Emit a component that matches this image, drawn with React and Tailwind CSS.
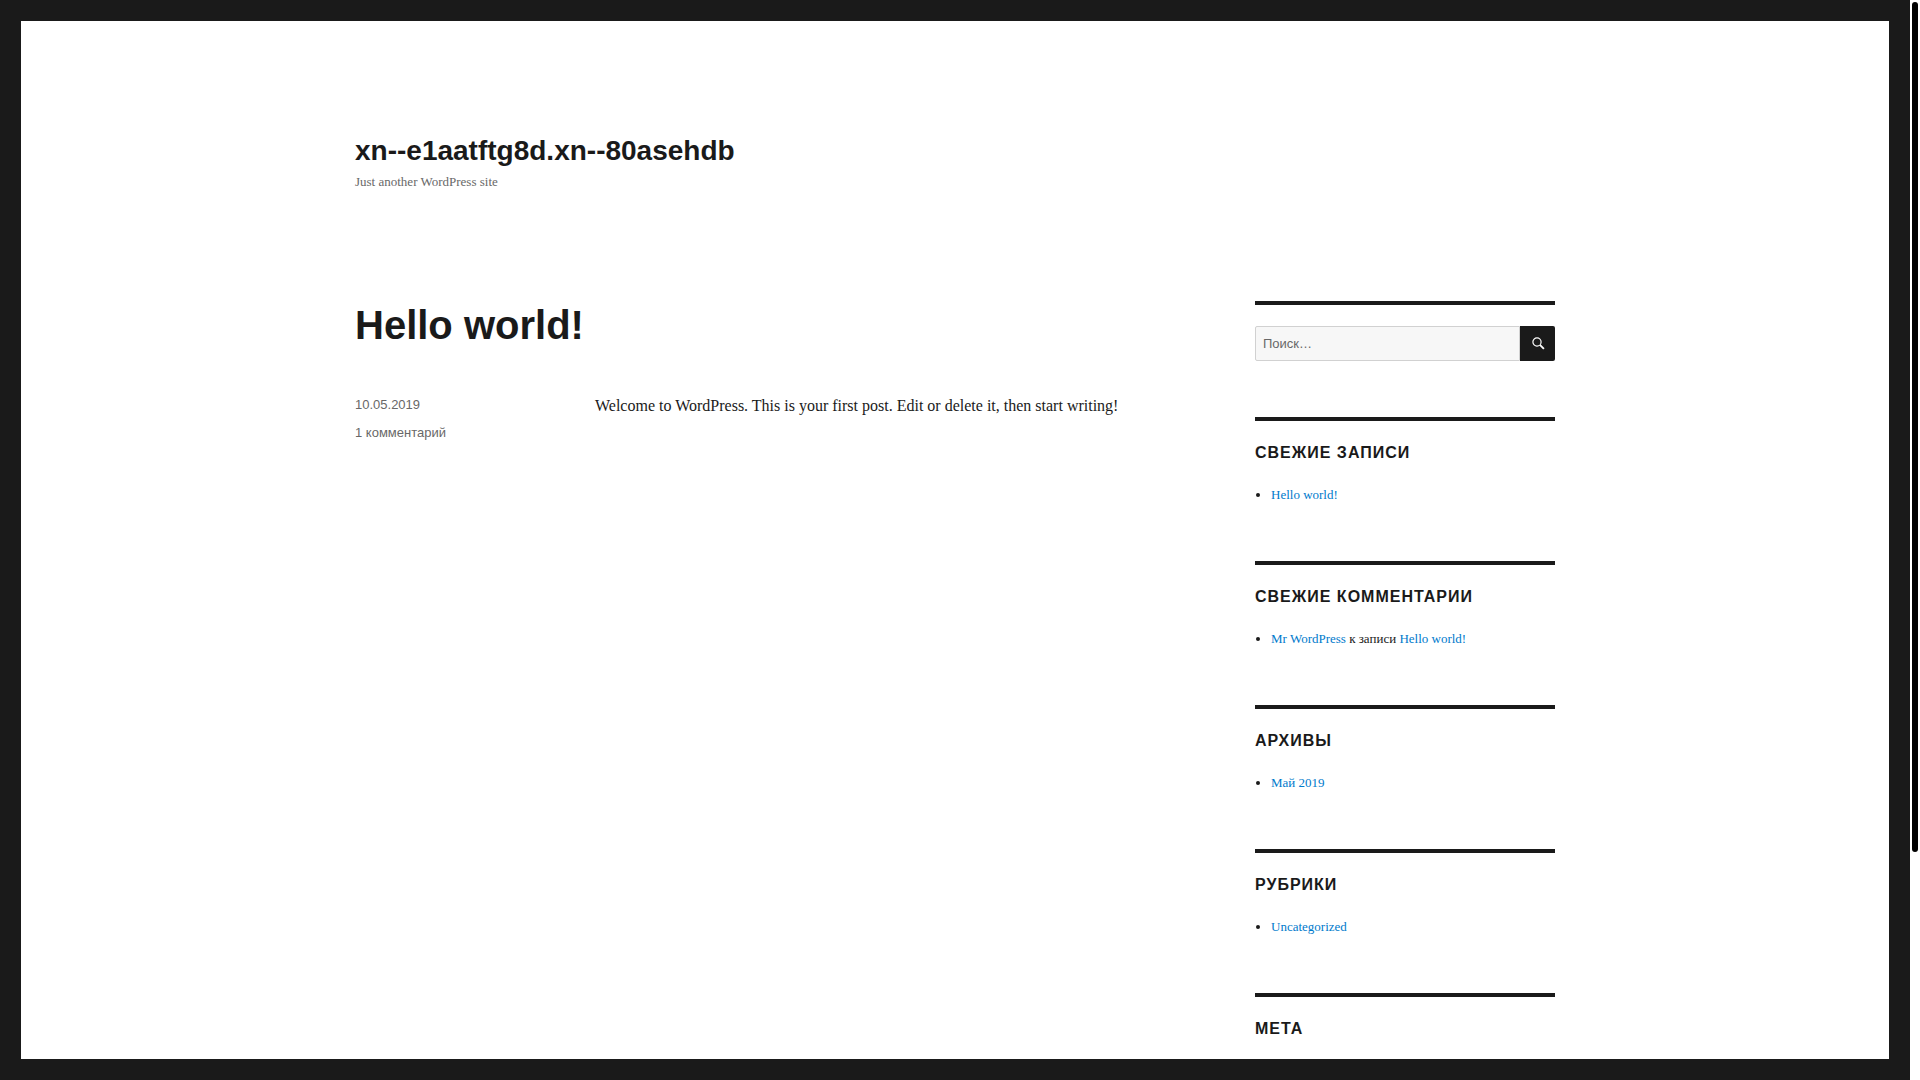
import React, { useState } from 'react';

const linkClass = 'text-[#007acc] hover:text-[#686868]';

function SearchIcon() {
  return (
    <svg viewBox="0 0 16 16" className="w-4 h-4" fill="none" stroke="currentColor" aria-hidden="true">
      <circle cx="7" cy="6" r="4.1" strokeWidth="1.2" />
      <path d="M9.9 8.9L13.9 12.9" strokeWidth="1.8" />
    </svg>
  );
}

function SearchForm() {
  const [query, setQuery] = useState('');

  return (
    <form role="search" className="flex" onSubmit={(e) => e.preventDefault()}>
      <input
        type="search"
        aria-label="Поиск"
        placeholder="Поиск…"
        value={query}
        onChange={(e) => setQuery(e.target.value)}
        className="flex-1 min-w-0 h-[35px] px-[7px] font-['Liberation_Sans',sans-serif] text-[13px] text-[#686868] placeholder:text-[#686868] bg-[#f7f7f7] border border-[#d1d1d1] rounded-l-xs outline-none focus:bg-white focus:border-[#007acc]"
      />
      <button
        type="submit"
        aria-label="Найти"
        className="w-[35px] h-[35px] flex items-center justify-center bg-[#1a1a1a] text-white rounded-r-xs hover:bg-[#007acc]"
      >
        <SearchIcon />
      </button>
    </form>
  );
}

function Widget({ title, children }) {
  return (
    <section className="border-t-4 border-[#1a1a1a] pt-[21px] mb-14">
      {title && (
        <h2 className="mb-[21px] font-['Liberation_Sans',sans-serif] text-base leading-[21px] font-bold uppercase tracking-[1px]">
          {title}
        </h2>
      )}
      {children}
    </section>
  );
}

function WidgetList({ children }) {
  return <ul className="list-disc pl-4 text-[13px] leading-[21px]">{children}</ul>;
}

export default function App() {
  return (
    <div className="h-screen flex bg-white font-['Liberation_Serif',serif] text-base text-[#1a1a1a]">
      <div className="flex-1 min-w-0 border-[21px] border-[#1a1a1a] overflow-y-auto [scrollbar-width:none]">
        <div className="max-w-[1200px] mx-auto">
          <header className="pt-28 pb-28">
            <p className="font-['Liberation_Sans',sans-serif] text-[28px] leading-[35px] font-bold">
              <a href="#">xn--e1aatftg8d.xn--80asehdb</a>
            </p>
            <p className="mt-[7px] text-[13px] leading-[14px] text-[#686868]">Just another WordPress site</p>
          </header>

          <div className="flex justify-between">
            <main className="w-2/3">
              <article>
                <h1 className="mb-[42px] font-['Liberation_Sans',sans-serif] text-[40px] leading-[49px] font-bold">
                  <a href="#">Hello world!</a>
                </h1>
                <div className="flex">
                  <footer className="w-[30%] pt-[2px] font-['Liberation_Sans',sans-serif] text-[13px] leading-[21px] text-[#686868]">
                    <a href="#" className="block mb-[7px]">
                      <time dateTime="2019-05-10">10.05.2019</time>
                    </a>
                    <a href="#" className="block">1 комментарий</a>
                  </footer>
                  <p className="flex-1 leading-7">
                    Welcome to WordPress. This is your first post. Edit or delete it, then start writing!
                  </p>
                </div>
              </article>
            </main>

            {/* Sidebar */}
            <aside className="w-1/4">
              <Widget>
                <SearchForm />
              </Widget>
              <Widget title="Свежие записи">
                <WidgetList>
                  <li><a href="#" className={linkClass}>Hello world!</a></li>
                </WidgetList>
              </Widget>
              <Widget title="Свежие комментарии">
                <WidgetList>
                  <li>
                    <a href="#" className={linkClass}>Mr WordPress</a> к записи{' '}
                    <a href="#" className={linkClass}>Hello world!</a>
                  </li>
                </WidgetList>
              </Widget>
              <Widget title="Архивы">
                <WidgetList>
                  <li><a href="#" className={linkClass}>Май 2019</a></li>
                </WidgetList>
              </Widget>
              <Widget title="Рубрики">
                <WidgetList>
                  <li><a href="#" className={linkClass}>Uncategorized</a></li>
                </WidgetList>
              </Widget>
              <Widget title="Мета" />
            </aside>
          </div>
        </div>
      </div>

      {/* Scrollbar */}
      <div className="w-[10px] p-[2px] bg-white">
        <div className="h-[79%] rounded-full bg-black" />
      </div>
    </div>
  );
}
